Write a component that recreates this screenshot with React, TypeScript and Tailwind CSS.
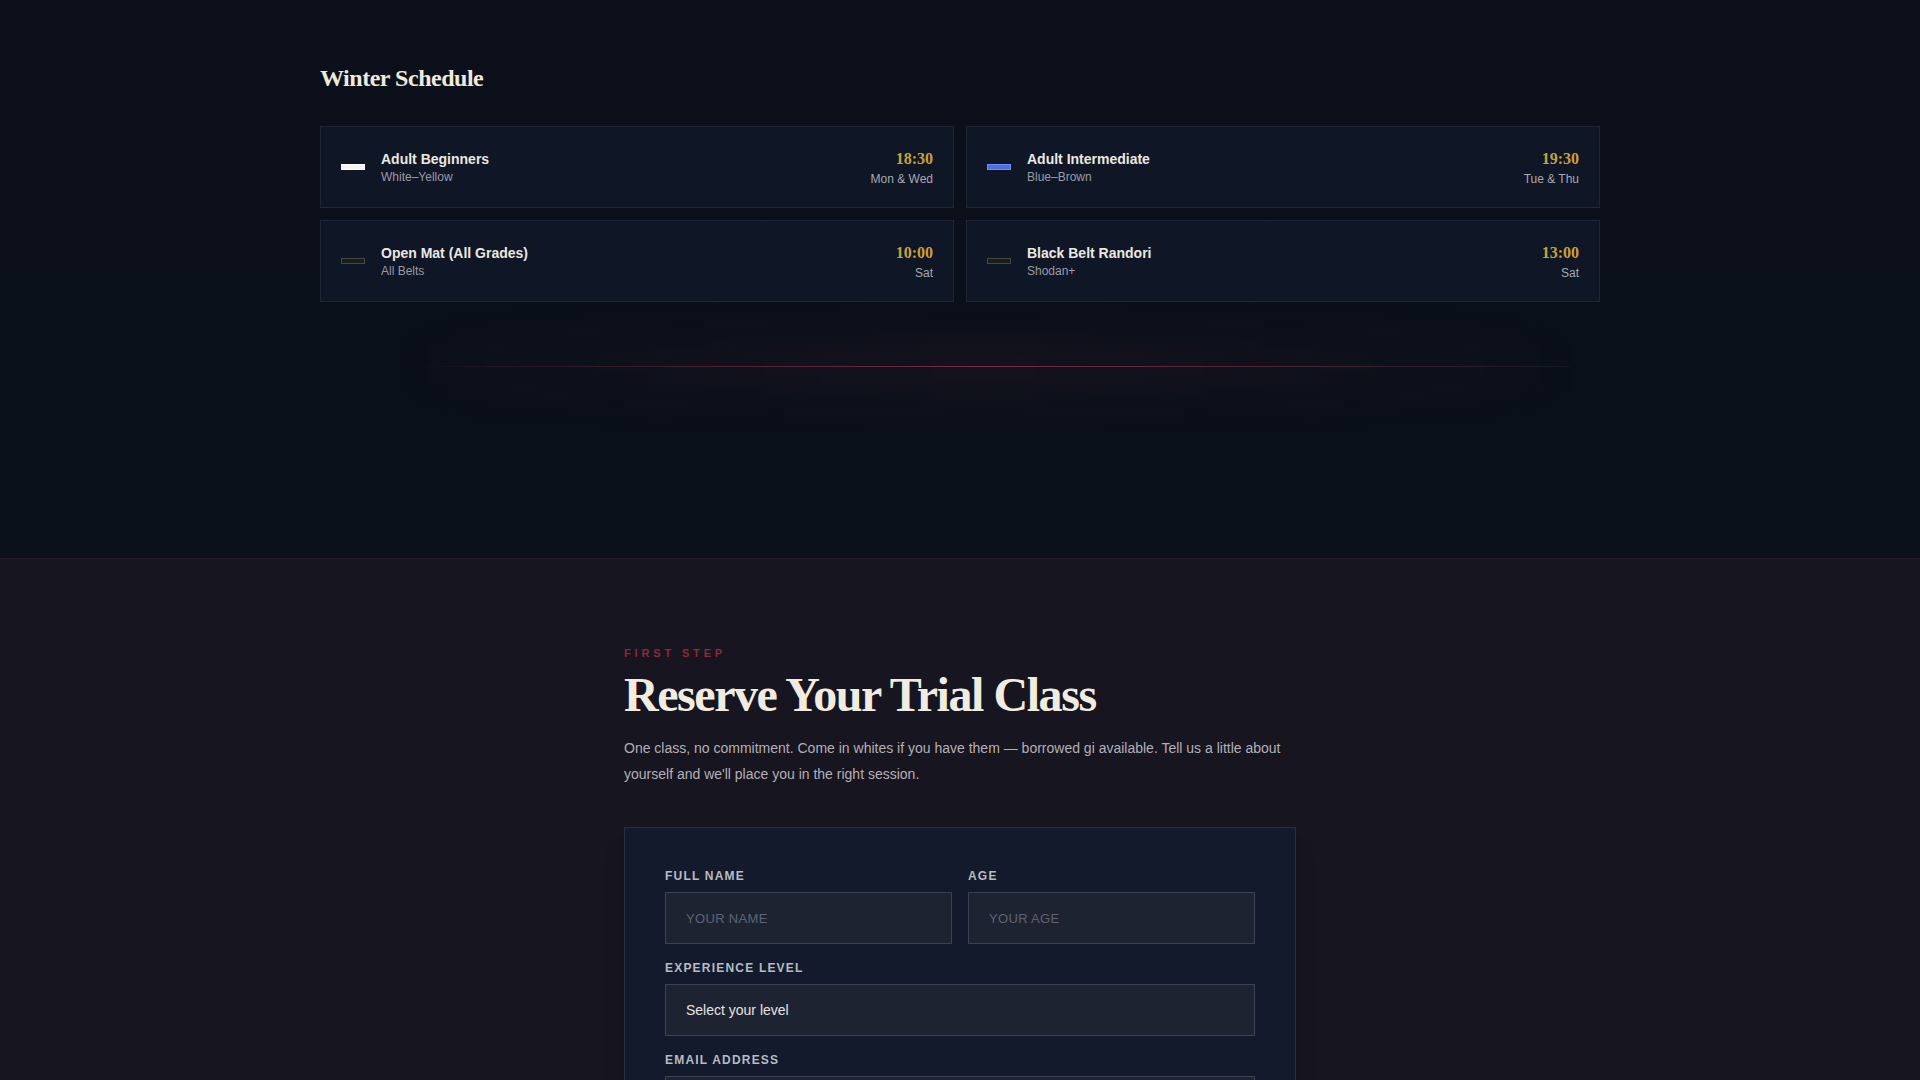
const classes = [
  { name: "Adult Beginners", grades: "White–Yellow", time: "18:30", days: "Mon & Wed", belt: "bg-[#f4f4f2] border-[#ffffff]" },
  { name: "Adult Intermediate", grades: "Blue–Brown", time: "19:30", days: "Tue & Thu", belt: "bg-[#4f6fe0] border-[#6f8cf0]" },
  { name: "Open Mat (All Grades)", grades: "All Belts", time: "10:00", days: "Sat", belt: "bg-[#1b1d1c] border-[#464644]" },
  { name: "Black Belt Randori", grades: "Shodan+", time: "13:00", days: "Sat", belt: "bg-[#1b1d1c] border-[#464644]" },
];

function ScheduleCard({ item }: { item: (typeof classes)[number] }) {
  return (
    <div className="flex items-center justify-between border border-[#1e2534] bg-[#0f1626] p-5">
      <div className="flex items-center gap-4">
        <span className={`block h-[6px] w-6 border ${item.belt}`} />
        <div>
          <div className="text-sm font-bold leading-5 text-[#ece8e0]">{item.name}</div>
          <div className="text-xs leading-4 text-[#9a9ca5]">{item.grades}</div>
        </div>
      </div>
      <div className="text-right">
        <div className="text-base font-bold leading-6 text-[#c9a13a]" style={{ fontFamily: '"Liberation Serif", serif' }}>
          {item.time}
        </div>
        <div className="text-xs leading-4 text-[#a8aab2]">{item.days}</div>
      </div>
    </div>
  );
}

function Label({ children }: { children: string }) {
  return <span className="mb-2 text-xs font-bold leading-4 tracking-[0.1em] text-[#b9bac2]">{children}</span>;
}

function Field({ label, placeholder }: { label: string; placeholder: string }) {
  return (
    <label className="flex flex-col">
      <Label>{label}</Label>
      <input
        placeholder={placeholder}
        className="h-[52px] border border-[#3a4152] bg-[#1e2332] px-5 text-[13px] tracking-wide text-[#e6e4e0] outline-none placeholder:text-[#5d6373]"
      />
    </label>
  );
}

export default function App() {
  return (
    <div className="min-h-screen bg-[#17151f]" style={{ fontFamily: '"Liberation Sans", Arial, sans-serif' }}>
      {/* schedule */}
      <section className="bg-gradient-to-b from-[#0b0f1a] to-[#0a111b] pb-[191px] pt-[62px]">
        <div className="mx-auto max-w-7xl">
          <h2
            className="mb-8 text-2xl font-bold leading-8 tracking-[-0.02em] text-[#efe9dc]"
            style={{ fontFamily: '"Liberation Serif", serif' }}
          >
            Winter Schedule
          </h2>
          <div className="grid grid-cols-2 gap-3">
            {classes.map((c) => (
              <ScheduleCard key={c.name} item={c} />
            ))}
          </div>

          {/* divider with soft glow */}
          <div className="relative mt-16 h-px">
            <div className="absolute left-[80px] right-[30px] -top-3 h-6 bg-gradient-to-r from-transparent via-[#4a1a2c]/40 to-transparent blur-xl" />
            <div className="absolute left-[80px] right-[30px] top-0 h-px bg-gradient-to-r from-transparent via-[#7a2c46] to-[#2c2a3a]/30" />
          </div>
        </div>
      </section>

      {/* trial booking */}
      <section className="border-t border-[#211d2a] pb-24 pt-[86px]">
        <div className="mx-auto max-w-2xl">
          <p className="mb-1 text-[11px] font-semibold leading-4 tracking-[0.35em] text-[#8b2a3a]">FIRST STEP</p>
          <h1
            className="text-5xl font-bold leading-tight tracking-[-0.03em] text-[#f2ece0]"
            style={{ fontFamily: '"Liberation Serif", serif' }}
          >
            Reserve Your Trial Class
          </h1>
          <p className="mt-2.5 text-sm leading-[26px] text-[#b3b0b8]">
            One class, no commitment. Come in whites if you have them — borrowed gi available. Tell us a little about
            yourself and we'll place you in the right session.
          </p>

          <form className="mt-10 flex flex-col gap-4 border border-[#272f40] bg-[#121a2b] p-10 shadow-xl shadow-black/20">
            <div className="grid grid-cols-2 gap-4">
              <Field label="FULL NAME" placeholder="YOUR NAME" />
              <Field label="AGE" placeholder="YOUR AGE" />
            </div>
            <div className="flex flex-col">
              <Label>EXPERIENCE LEVEL</Label>
              <div className="flex h-[52px] items-center border border-[#3a4152] bg-[#1e2332] px-5 text-sm text-[#e6e4e0]">
                Select your level
              </div>
            </div>
            <Field label="EMAIL ADDRESS" placeholder="YOU@EXAMPLE.COM" />
            <button
              type="button"
              className="mt-4 h-[52px] bg-[#8b2a3a] text-sm font-bold tracking-[0.15em] text-[#f2ece0]"
            >
              BOOK MY TRIAL
            </button>
          </form>
        </div>
      </section>
    </div>
  );
}
